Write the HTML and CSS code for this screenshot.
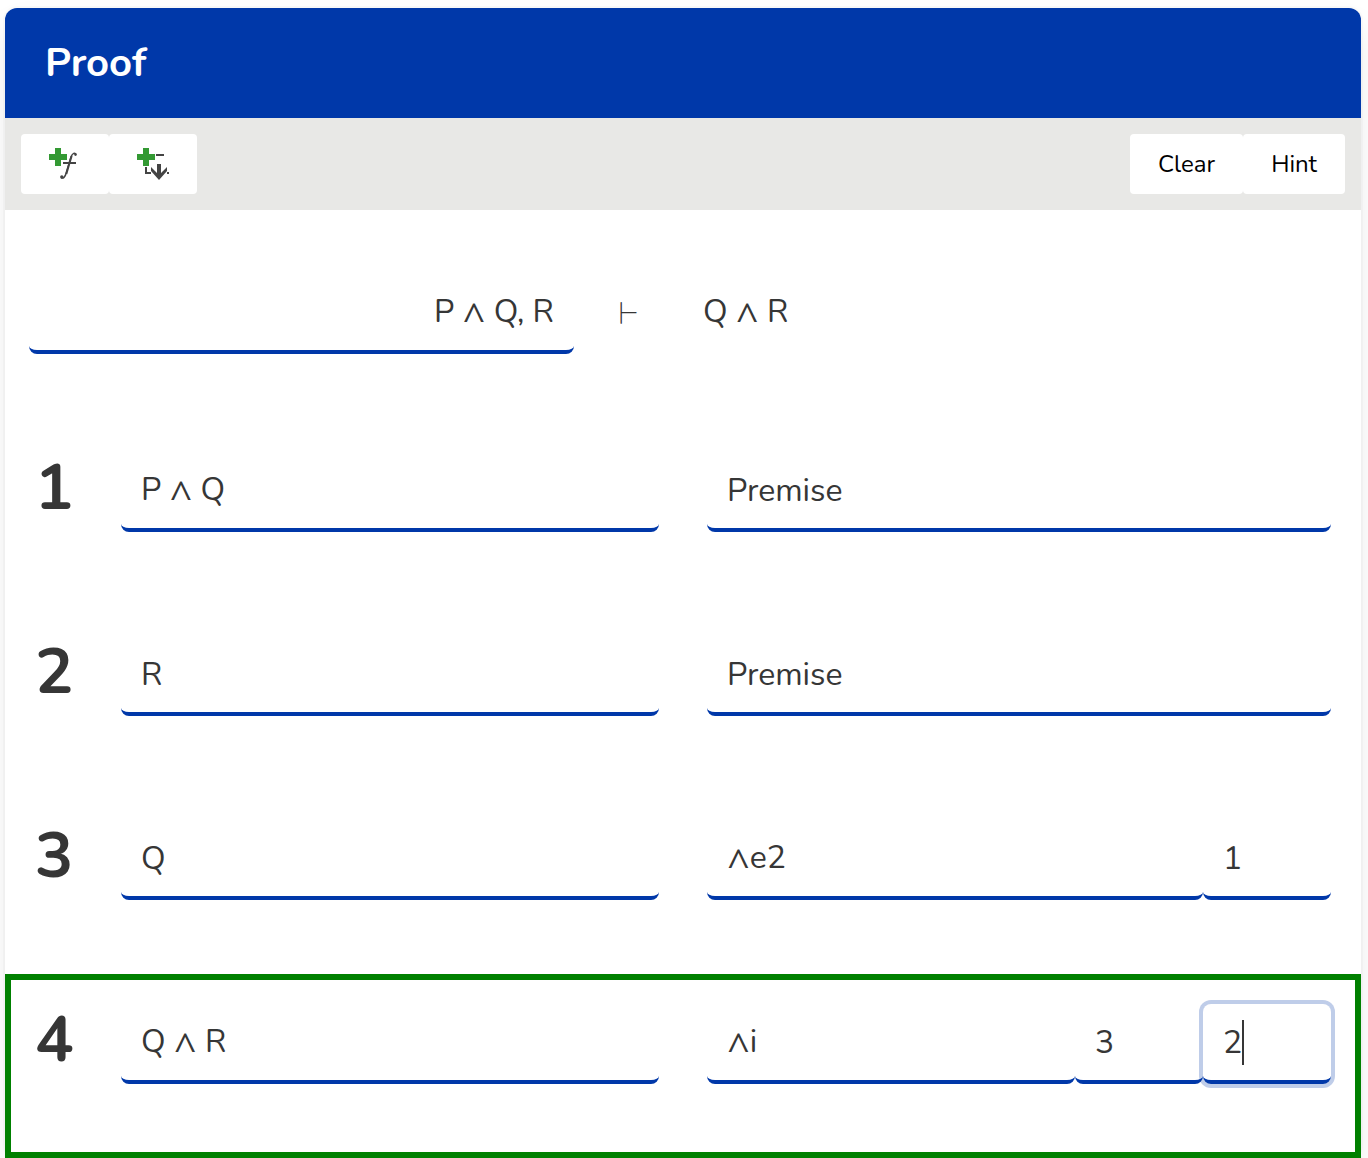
FILE: index.html
```html
<!DOCTYPE html>
<html lang="en">
<head>
<meta charset="utf-8">
<title>Proof</title>
<link rel="stylesheet" href="styles.css">
</head>
<body>
<main class="card">
  <header class="card-header"><h1 class="title">Proof</h1></header>
  <div class="toolbar">
    <div class="buttons">
      <button class="button" type="button" aria-label="Add line">
        <svg class="icon" viewBox="0 0 32 32" aria-hidden="true">
          <path d="M27 6.500C26 4.300 23.500 5 22 9L17 25.500C16.200 29 14 31 12.400 29.600" fill="none" stroke="#444" stroke-width="1.500"/>
          <path d="M22.600 8L20.800 14 17.300 26" fill="none" stroke="#444" stroke-width="2"/>
          <path d="M14 14h13v2H14z" fill="#444"/>
          <circle cx="26.500" cy="6.600" r="1.300" fill="#444"/><circle cx="12.800" cy="29" r="1.700" fill="#444"/>
          <path d="M6 0h6v6h6v6h-6v6H6v-6H0V6h6z" fill="#339933"/>
        </svg>
      </button>
      <button class="button" type="button" aria-label="Add box">
        <svg class="icon" viewBox="0 0 32 32" aria-hidden="true">
          <path d="M19 6h8v2h-8zM8 19h2v5h4v2H8zM30 24h2v2h-2zM20 16h4v9l6-6v4l-8 9-8-9v-4l6 6z" fill="#444"/>
          <path d="M6 0h6v6h6v6h-6v6H6v-6H0V6h6z" fill="#339933"/>
        </svg>
      </button>
    </div>
    <div class="buttons">
      <button class="button" type="button">Clear</button>
      <button class="button" type="button">Hint</button>
    </div>
  </div>
  <form class="proof">
    <div class="sequent">
      <input class="field premises" aria-label="Premises" value="P ∧ Q, R">
      <span class="turnstile">⊢</span>
      <input class="field conclusion" aria-label="Conclusion" value="Q ∧ R">
    </div>
    <div class="line">
      <span class="number">1</span>
      <input class="field formula" aria-label="Formula 1" value="P ∧ Q">
      <div class="reason"><input class="field rule" aria-label="Rule 1" value="Premise"></div>
    </div>
    <div class="line">
      <span class="number">2</span>
      <input class="field formula" aria-label="Formula 2" value="R">
      <div class="reason"><input class="field rule" aria-label="Rule 2" value="Premise"></div>
    </div>
    <div class="line">
      <span class="number">3</span>
      <input class="field formula" aria-label="Formula 3" value="Q">
      <div class="reason">
        <input class="field rule" aria-label="Rule 3" value="∧e2">
        <input class="field ref" aria-label="Reference for line 3" value="1">
      </div>
    </div>
    <div class="line current">
      <span class="number">4</span>
      <input class="field formula" aria-label="Formula 4" value="Q ∧ R">
      <div class="reason">
        <input class="field rule" aria-label="Rule 4" value="∧i">
        <input class="field ref" aria-label="First reference for line 4" value="3">
        <div class="active-ref"><input class="field ref focused" aria-label="Second reference for line 4" value="2"><span class="caret"></span></div>
      </div>
    </div>
  </form>
</main>
</body>
</html>
```

FILE: styles.css
```css
* { box-sizing: border-box; }

body {
  margin: 0;
  padding: 8px 7px 8px 5px;
  background: #fff;
  color: #363636;
  font-family: Nunito, "Noto Sans Math", Lato, sans-serif;
}

.card {
  border-radius: 12px;
  background: #fff;
  box-shadow: 0 16px 32px -4px rgba(10, 10, 10, 0.1), 0 0 0 2px rgba(10, 10, 10, 0.02);
}

.card-header {
  display: flex;
  align-items: center;
  height: 110px;
  padding: 0 40px;
  border-radius: 12px 12px 0 0;
  background: #0038a9;
}

.title {
  margin: 0;
  color: #fff;
  font-size: 40px;
  line-height: 60px;
}

.toolbar {
  display: flex;
  justify-content: space-between;
  padding: 16px;
  background: #e8e8e6;
}

.buttons { display: flex; }

.button {
  display: flex;
  align-items: center;
  height: 60px;
  padding: 0 28px;
  border: 0;
  border-radius: 4px;
  background: #fff;
  color: #000;
  font: inherit;
  font-size: 24px;
}

.icon { width: 32px; height: 32px; }

.sequent {
  display: grid;
  grid-template-columns: 545fr 109fr 648fr;
  padding: 64px 30px 68px 24px;
}

.field {
  min-width: 0;
  height: 80px;
  padding: 0 20px;
  border: 0;
  border-bottom: 4px solid #0038a9;
  border-radius: 8px;
  outline: 0;
  background: transparent;
  color: inherit;
  font: inherit;
  font-size: 32px;
  line-height: 76px;
}

.premises { text-align: right; }

.turnstile {
  font-family: Nunito, math;
  font-size: 32px;
  line-height: 80px;
  text-align: center;
}

.conclusion { border-color: transparent; }

.line {
  display: grid;
  grid-template-columns: 92px minmax(0, 538fr) 48px minmax(0, 624fr);
  height: 184px;
  padding: 30px 30px 0 24px;
}

.number {
  padding-left: 6px;
  font-size: 64px;
  font-weight: 700;
  line-height: 72px;
}

.reason {
  display: flex;
  grid-column: 4;
}

.rule { flex: 1; }

.ref { width: 128px; }

.active-ref { position: relative; }

.focused {
  box-shadow: 0 0 0 4px rgba(0, 56, 169, 0.25);
  caret-color: transparent;
}

.caret {
  position: absolute;
  top: 16px;
  left: 39px;
  width: 2px;
  height: 45px;
  background: #363636;
}

.current {
  margin-bottom: -8px;
  outline: 6px solid green;
  outline-offset: -6px;
}
```
